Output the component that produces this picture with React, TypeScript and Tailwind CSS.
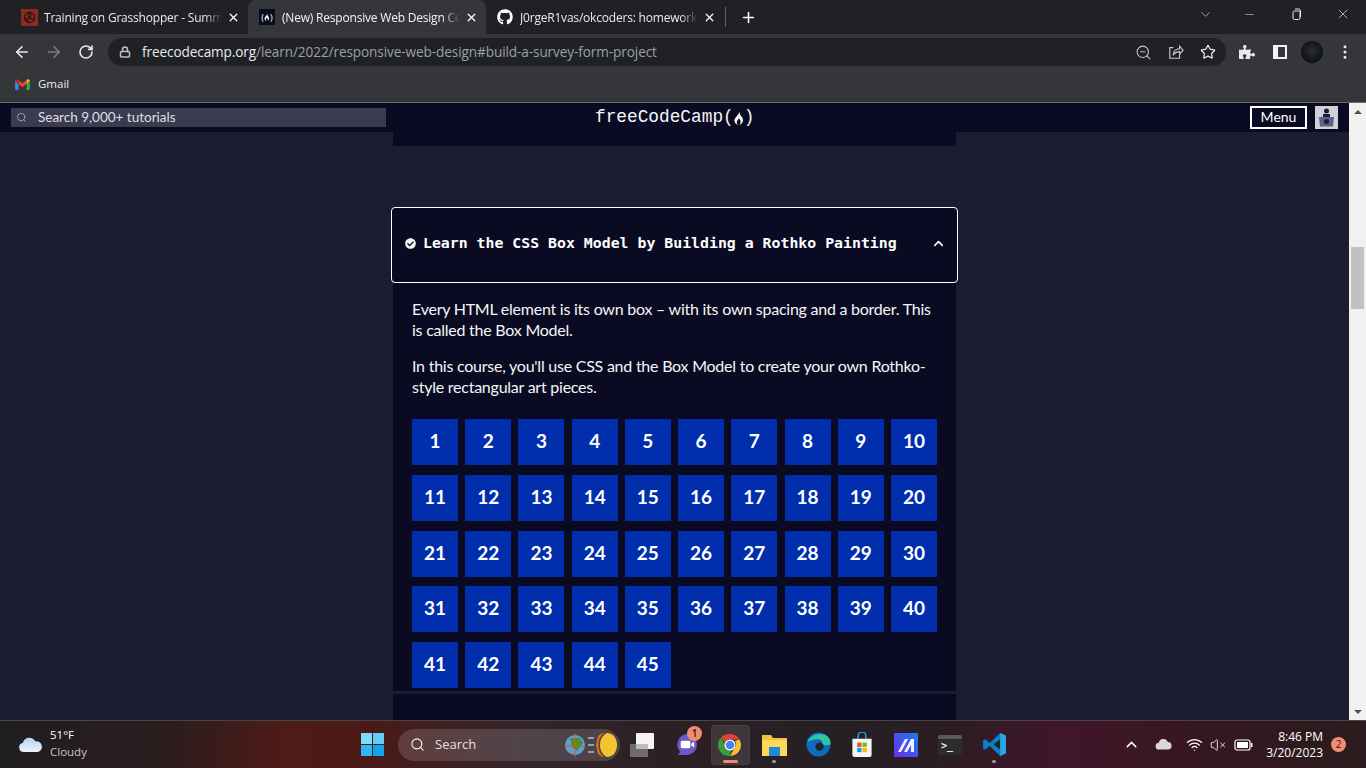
import React from 'react';
import { ArrowLeft, ArrowRight, ChevronDown, ChevronUp, Lock, Minus, Plus, RotateCw, Search, X, EllipsisVertical, Star, Wifi, VolumeX, ZoomOut } from 'lucide-react';
import { FaGithub, FaCheckCircle, FaPuzzlePiece } from 'react-icons/fa';

const NUMBERS = Array.from({ length: 45 }, (_, i) => i + 1);

const Flame = ({ className }: { className?: string }) => (
  <svg viewBox="0 0 12 16" className={className} fill="currentColor">
    <path d="M6.300 0.500c.5 2.600-1 3.800-2.300 5.600C2.900 7.600 1 9.200 1 11c0 2.500 1.800 4.300 3.800 4.700-1.200-1-1.500-2.400-.9-3.700.5-1 1.500-1.700 1.700-3.100 1.300 1 2.600 2.900 2 4.800-.2.700-.6 1.400-1.300 2 2.200-.4 4-2.200 4-4.700 0-2.400-1.500-3.700-2.500-5.200C7 4.300 6.300 2.600 6.300 0.500z" />
  </svg>
);

const Tab = ({ icon, title, active }: { icon: React.ReactNode; title: string; active?: boolean }) => (
  <div className={`flex h-[34px] w-[238px] shrink-0 items-center gap-[5px] pl-[9px] pr-[8px] ${active ? 'rounded-t-lg bg-[#35363a] text-[#f1f3f4]' : 'text-[#e8eaed]'}`}>
    <span className="flex w-[20px] shrink-0 justify-center">{icon}</span>
    <span className="min-w-0 flex-1 whitespace-nowrap pt-[1px] text-[12px] tracking-[-0.2px] [mask-image:linear-gradient(to_right,black_90%,transparent)]">{title}</span>
    <X size={13} strokeWidth={2.4} className="shrink-0 text-white" />
  </div>
);

const ChromeBar = () => (
  <div className="font-['Open_Sans',sans-serif]">
    <div className="flex h-[34px] items-center bg-[#202124] pl-[10px]">
      <Tab
        title="Training on Grasshopper - Summ"
        icon={
          <span className="flex h-[17px] w-[17px] items-center justify-center bg-[#8e2a20]">
            <svg viewBox="0 0 16 16" className="h-[15px] w-[15px]" fill="none" stroke="#2b1512" strokeWidth="1.4">
              <circle cx="8" cy="8" r="5.500" />
              <path d="M8 2.500c3 2 1 4 0 5.500S4 10 2.500 8M13.500 8c-2 3-4 1-5.500 0s-2-4 0-5.500M8 13.500c-2.500-1-2-4 0-5.500" />
            </svg>
          </span>
        }
      />
      <Tab
        active
        title="(New) Responsive Web Design Ce"
        icon={
          <span className="flex h-[16px] w-[16px] items-center justify-center bg-[#0a0a23] text-[9px] leading-none text-white">
            (<Flame className="h-[8px] w-[6px]" />)
          </span>
        }
      />
      <Tab title="J0rgeR1vas/okcoders: homework" icon={<FaGithub size={16} className="text-white" />} />
      <span className="ml-[1px] h-[20px] w-px bg-[#5f6368]" />
      <Plus size={17} strokeWidth={2.200} className="ml-[14px] text-white" />
      <div className="-mt-[6px] ml-auto flex items-center text-[#e8eaed]">
        <ChevronDown size={15} strokeWidth={1} className="mr-[30px]" />
        <Minus size={13} strokeWidth={1} className="mr-[35px]" />
        <svg viewBox="0 0 12 12" className="mr-[32px] h-[12px] w-[12px]" fill="none" stroke="currentColor" strokeWidth="1">
          <rect x="2" y="3" width="7" height="8.500" rx="1.500" />
          <path d="M4 1h3.500a2 2 0 0 1 2 2v6" />
        </svg>
        <X size={16} strokeWidth={1} className="mr-[15px]" />
      </div>
    </div>

    <div className="flex h-[34px] items-center bg-[#35363a] pt-[2px]">
      <ArrowLeft size={18} strokeWidth={2.200} className="ml-[13px] text-[#e8eaed]" />
      <ArrowRight size={18} strokeWidth={2.200} className="ml-[14px] text-[#7b7d80]" />
      <RotateCw size={16} strokeWidth={2.400} className="ml-[15px] text-[#e8eaed]" />
      <div className="ml-[14px] flex h-[28px] w-[1118px] items-center rounded-full bg-[#202124] pl-[11px] pr-[10px]">
        <Lock size={12} strokeWidth={3} className="text-[#bdc1c6]" />
        <span className="ml-[11px] whitespace-nowrap text-[13.6px] tracking-[-0.1px] text-[#9aa0a6]">
          <span className="text-[#e8eaed]">freecodecamp.org</span>/learn/2022/responsive-web-design#build-a-survey-form-project
        </span>
        <div className="ml-auto flex items-center gap-[16px] text-[#c4c7c5]">
          <ZoomOut size={17} strokeWidth={1.500} />
          <svg viewBox="0 0 18 18" className="h-[16px] w-[16px]" fill="none" stroke="currentColor" strokeWidth="1.300">
            <path d="M6 4H2v12h11v-4" />
            <path d="M6 12c0-4 3-6.500 7-6.500V2.500l4 4.500-4 4.500V8.500c-3 0-5 1-7 3.500z" />
          </svg>
          <Star size={16} strokeWidth={1.800} className="text-[#e8eaed]" />
        </div>
      </div>
      <FaPuzzlePiece size={16} className="ml-[13px] text-[#e8eaed]" />
      <span className="ml-[18px] flex h-[14px] w-[14px] justify-end border-2 border-[#f1f3f4] bg-[#f1f3f4]">
        <span className="h-full w-[7px] bg-[#35363a]" />
      </span>
      <span className="ml-[14px] h-[22px] w-[22px] rounded-full bg-[radial-gradient(circle_at_50%_45%,#2a3038,#0e0e10_75%)]" />
      <EllipsisVertical size={18} strokeWidth={2} className="ml-[13px] text-[#e8eaed]" />
    </div>

    <div className="flex h-[34px] items-center bg-[#35363a] pb-[2px] pl-[15px] text-[11.500px] text-[#e8eaed]">
      <svg viewBox="0 0 16 12" className="h-[11px] w-[15px]">
        <path d="M0 2v9a1 1 0 0 0 1 1h2.500V5.500z" fill="#4285f4" />
        <path d="M16 2v9a1 1 0 0 1-1 1h-2.500V5.500z" fill="#34a853" />
        <path d="M3.500 5.500V1L8 4.600 12.500 1v4.500L8 9z" fill="#ea4335" />
        <path d="M0 2c0-1.400 1.500-2.300 2.700-1.400l.8.400v4.500z" fill="#c5221f" />
        <path d="M16 2c0-1.400-1.500-2.300-2.700-1.400l-.8.400v4.500z" fill="#fbbc04" />
      </svg>
      <span className="ml-[8px]">Gmail</span>
    </div>
    <div className="h-px bg-[#6b6c70]" />
  </div>
);

const FccNav = () => (
  <div className="flex h-[29px] shrink-0 items-center bg-[#0a0a23] font-['Lato',sans-serif] text-white">
    <div className="ml-[11px] flex h-[19px] w-[375px] items-center bg-[#3b3b4f] pl-[5px] text-[13.500px] text-[#dfdfe2]">
      <Search size={11} strokeWidth={1.500} className="text-[#bdbdc6]" />
      <span className="ml-[11px] pb-[1px]">Search 9,000+ tutorials</span>
    </div>
    <div className="ml-[209px] flex items-center whitespace-nowrap font-['Liberation_Mono',monospace] text-[17.8px] leading-none text-[#f5f6f7]">
      freeCodeCamp(
      <Flame className="-mx-[1px] h-[15px] w-[12px]" />)
    </div>
    <div className="ml-auto flex h-[23px] w-[57px] items-center justify-center border-2 border-white pb-[2px] text-[14px]">Menu</div>
    <div className="ml-[8px] mr-[11px] flex h-[23px] w-[23px] flex-col items-center justify-end bg-[#d0d0d5]">
      <svg viewBox="0 0 23 23" className="h-[23px] w-[23px]">
        <circle cx="11.500" cy="5" r="2.500" fill="#1b1b32" />
        <rect x="8" y="8" width="7" height="3" fill="#1b1b32" />
        <path d="M4 11h15l-1 9.500H5z" fill="#5f5f8a" />
        <circle cx="11.500" cy="15.500" r="2.500" fill="#1b1b32" />
      </svg>
    </div>
  </div>
);

const Scrollbar = () => (
  <div className="flex w-[17px] shrink-0 flex-col items-center bg-[#f1f1f1]">
    <div className="mt-[7px] h-0 w-0 border-x-[4px] border-b-[4px] border-x-transparent border-b-[#505050]" />
    <div className="mt-[133px] h-[62px] w-[13px] bg-[#c1c1c1]" />
    <div className="mt-auto mb-[6px] h-0 w-0 border-x-[4px] border-t-[4px] border-x-transparent border-t-[#505050]" />
  </div>
);

const Certification = () => (
  <div className="flex min-h-0 flex-1 flex-col items-center overflow-hidden bg-[#1b1b32] font-['Lato',sans-serif] text-[#f5f6f7]">
    <div className="h-[14px] w-[563px] shrink-0 bg-[#0a0a23]" />
    <div className="mt-[61px] flex h-[76px] w-[567px] shrink-0 items-center rounded-[4px] border border-white bg-[#0a0a23] pb-[4px] pl-[13px] pr-[11px]">
      <FaCheckCircle size={11} className="text-[#f5f6f7]" />
      <span className="ml-[7px] whitespace-nowrap font-['DejaVu_Sans_Mono',monospace] text-[14.85px] font-bold text-white">
        Learn the CSS Box Model by Building a Rothko Painting
      </span>
      <ChevronUp size={15} strokeWidth={2.500} className="ml-auto text-white" />
    </div>
    <div className="w-[563px] shrink-0 bg-[#0a0a23] px-[19px] pb-[3px] pt-[15px] text-[16px] leading-[21px] tracking-[-0.24px]">
      <p>Every HTML element is its own box – with its own spacing and a border. This is called the Box Model.</p>
      <p className="mt-[15px]">In this course, you'll use CSS and the Box Model to create your own Rothko-style rectangular art pieces.</p>
      <div className="mt-[22px] grid w-[525px] grid-cols-[repeat(10,46px)] justify-between gap-y-[9.75px] tracking-normal">
        {NUMBERS.map((n) => (
          <div key={n} className="flex h-[46px] items-center justify-center bg-[#002ead] pb-[3px] text-[19px] font-bold text-white">
            {n}
          </div>
        ))}
      </div>
    </div>
    <div className="h-[3px] w-[563px] shrink-0 bg-[#1b1b32]" />
    <div className="w-[563px] flex-1 bg-[#0a0a23]" />
  </div>
);

const Slot = ({ children, dot }: { children: React.ReactNode; dot?: boolean }) => (
  <div className="relative flex h-full w-[44px] shrink-0 items-center justify-center">
    {children}
    {dot && <span className="absolute bottom-[5px] h-[3px] w-[4px] rounded-full bg-[#9a9a9a]" />}
  </div>
);

const Taskbar = () => (
  <div className="flex h-[48px] shrink-0 items-center border-t border-[#4a4446] bg-[linear-gradient(90deg,#201e21_0%,#2a1d1e_12%,#4f1b17_21%,#4a1a17_27%,#33242a_38%,#2b2024_50%,#242024_62%,#2e1c24_70%,#41162a_78%,#36171f_88%,#2a1c1e_100%)] font-['Open_Sans',sans-serif] text-white">
    <svg viewBox="0 0 26 18" className="ml-[18px] h-[17px] w-[25px]">
      <defs>
        <linearGradient id="cloudFill" x1="0" y1="0" x2="0" y2="1">
          <stop offset="0" stopColor="#b8d4f0" />
          <stop offset="1" stopColor="#eef3fa" />
        </linearGradient>
      </defs>
      <path d="M6 17a5 5 0 0 1-1-9.900 7 7 0 0 1 13-1.500A5.500 5.500 0 0 1 20.500 17z" fill="url(#cloudFill)" />
    </svg>
    <div className="ml-[7px] w-[60px] pb-[3px] text-[11.500px] leading-[17px]">
      <div>51°F</div>
      <div className="text-[#c8c5c6]">Cloudy</div>
    </div>
    <div className="ml-[251px] grid h-[23px] w-[23px] grid-cols-2 gap-[1px]">
      <span className="bg-[#7fdcf9]" />
      <span className="bg-[#5fcdf6]" />
      <span className="bg-[#2fb6f4]" />
      <span className="bg-[#14a4ee]" />
    </div>
    <div className="ml-[14px] flex h-[32px] w-[222px] items-center rounded-full bg-white/15 pl-[12px] text-[13px] text-[#e4e0e1]">
      <Search size={15} strokeWidth={1.700} className="text-white" />
      <span className="ml-[10px]">Search</span>
      <svg viewBox="0 0 54 30" className="ml-auto mr-[2px] h-[30px] w-[54px]">
        <circle cx="11" cy="15" r="10" fill="#5f9fd0" />
        <path d="M6 8h10l3 5-6 8-5-4z" fill="#4f8f2a" />
        <path d="M11 3v24M1 16h20" stroke="#d8552f" strokeWidth="0.900" />
        <path d="M30 8h-6M30 15h-6M30 22h-6" stroke="#8fa3b3" strokeWidth="1.800" />
        <path d="M43 3c6 0 10 5 10 12s-4 12-10 12c-4-2-7-6-7-12s3-10 7-12z" fill="#f4c430" />
        <path d="M40 3c-4 3-5.500 7-5.500 12S36 24 40 27c-3 0-4-2-6-3l-2-9 2-9c2-1 3-3 6-3z" fill="#e0701f" />
      </svg>
    </div>
    <Slot>
      <svg viewBox="0 0 24 24" className="h-[24px] w-[24px]">
        <rect x="0" y="11" width="18" height="15" fill="#6e6c6d" rx="1" />
        <rect x="6" y="0" width="18" height="16" fill="#f4f4f4" rx="1" />
        <rect x="6" y="11" width="12" height="5" fill="#bdbbbc" />
      </svg>
    </Slot>
    <Slot>
      <svg viewBox="0 0 24 24" className="h-[23px] w-[23px]">
        <path d="M12 1a11 11 0 0 1 0 22H3l2.500-3.500A11 11 0 0 1 12 1z" fill="#6a5ac8" />
        <rect x="6" y="8" width="10" height="8" rx="1.500" fill="#fff" />
        <path d="M17 11l3-2v6l-3-2z" fill="#fff" />
      </svg>
      <span className="absolute left-[23px] top-[5px] flex h-[15px] w-[15px] items-center justify-center rounded-full bg-[#f28b72] text-[10px] font-semibold text-[#2a1a1a]">1</span>
    </Slot>
    <Slot>
      <div className="flex h-[40px] w-[39px] items-center justify-center rounded-[4px] border border-white/5 bg-white/10">
        <svg viewBox="0 0 24 24" className="h-[24px] w-[24px]">
          <path d="M12 1a11 11 0 0 1 9.500 5.500H12a5.500 5.500 0 0 0-5 3L3 4.500A11 11 0 0 1 12 1z" fill="#db4437" />
          <path d="M21.500 6.500A11 11 0 0 1 12 23l4.700-8.200A5.500 5.500 0 0 0 17 8z" fill="#fbc02d" />
          <path d="M12 23A11 11 0 0 1 3 4.500l4.700 8.200A5.500 5.500 0 0 0 13 17.300z" fill="#3c9a3f" />
          <circle cx="12" cy="12" r="5.500" fill="#fff" />
          <circle cx="12" cy="12" r="4.300" fill="#4285f4" />
        </svg>
      </div>
      <span className="absolute bottom-[5px] h-[3px] w-[15px] rounded-full bg-[#f28b72]" />
    </Slot>
    <Slot dot>
      <svg viewBox="0 0 25 23" className="h-[23px] w-[25px]">
        <path d="M0 2h9l2 3h14v18H0z" fill="#f4c038" />
        <path d="M0 7h25v16H0z" fill="#fbd75b" />
        <path d="M7 14h11v9H7z" fill="#1e88d9" />
      </svg>
    </Slot>
    <Slot>
      <svg viewBox="0 0 24 24" className="h-[25px] w-[25px]">
        <circle cx="12" cy="12" r="11.500" fill="#0f6cbd" />
        <path d="M1 11C3 3 12 0 19 3c4 2 5 6 4.500 9-2 1-6 1-8 0 1-3-1-5-4-5-4 0-9 1-10.500 4z" fill="#2ec4a8" />
        <circle cx="13" cy="14" r="4" fill="#20262b" />
      </svg>
    </Slot>
    <Slot>
      <svg viewBox="0 0 24 26" className="h-[25px] w-[24px]">
        <path d="M8 7V4a4 4 0 0 1 8 0v3" fill="none" stroke="#25a8d8" strokeWidth="1.500" />
        <path d="M2 7h20v17a2 2 0 0 1-2 2H4a2 2 0 0 1-2-2z" fill="#f4f4f4" />
        <rect x="7" y="11" width="4.500" height="4.500" fill="#f25022" />
        <rect x="12.500" y="11" width="4.500" height="4.500" fill="#7fba00" />
        <rect x="7" y="16.500" width="4.500" height="4.500" fill="#00a4ef" />
        <rect x="12.500" y="16.500" width="4.500" height="4.500" fill="#ffb900" />
      </svg>
    </Slot>
    <Slot>
      <svg viewBox="0 0 24 24" className="h-[24px] w-[24px]">
        <defs>
          <linearGradient id="maFill" x1="0" y1="1" x2="1" y2="0">
            <stop offset="0" stopColor="#6a2cf0" />
            <stop offset="1" stopColor="#1e7de8" />
          </linearGradient>
        </defs>
        <rect width="24" height="24" fill="url(#maFill)" />
        <path d="M4 19L11 6h3L7 19zM10 19L17 6h3v13h-3v-7l-4 7z" fill="#f2f2ff" />
      </svg>
    </Slot>
    <Slot>
      <div className="flex h-[20px] w-[24px] items-center rounded-[2px] bg-[linear-gradient(#5a5a5a_0,#5a5a5a_4px,#2c2c2c_4px)] pl-[3px] pt-[3px]">
        <span className="font-['DejaVu_Sans_Mono',monospace] text-[10px] font-bold leading-none text-[#e6e6e6]">&gt;_</span>
      </div>
    </Slot>
    <Slot dot>
      <svg viewBox="0 0 24 24" className="h-[25px] w-[25px]">
        <path d="M17.500 1L23 3.500v17L17.500 23 7.500 13.500 3 17 1 15.800V8.200L3 7l4.500 3.500z" fill="#0a7fc9" />
        <path d="M17.500 7L11 12l6.500 5z" fill="#20262b" />
        <path d="M17.500 1L23 3.500v17L17.500 23z" fill="#28a8ea" />
      </svg>
    </Slot>
    <ChevronUp size={17} strokeWidth={2} className="ml-[107px] text-white" />
    <svg viewBox="0 0 20 14" className="ml-[15px] h-[13px] w-[17px]">
      <path d="M5 13a4 4 0 0 1-.5-8 5.500 5.500 0 0 1 10.500-1A4.500 4.500 0 0 1 15 13z" fill="#d9d7d8" />
    </svg>
    <Wifi size={17} strokeWidth={1.800} className="ml-[14px] text-white" />
    <VolumeX size={16} strokeWidth={1.400} className="ml-[7px] text-[#e8e8e8]" />
    <svg viewBox="0 0 19 12" className="ml-[8px] h-[12px] w-[19px]">
      <rect x="1" y="1" width="15" height="10" rx="2" fill="none" stroke="#fff" strokeWidth="1.200" />
      <rect x="3" y="3" width="11" height="6" fill="#fff" />
      <rect x="17" y="4" width="1.500" height="4" fill="#fff" />
    </svg>
    <div className="ml-[12px] w-[58px] text-right text-[12px] leading-[16px]">
      <div>8:46 PM</div>
      <div className="whitespace-nowrap">3/20/2023</div>
    </div>
    <span className="ml-[8px] flex h-[15px] w-[15px] items-center justify-center rounded-full bg-[#f28b72] text-[10px] text-[#2a1a1a]">2</span>
  </div>
);

export default function App() {
  return (
    <div className="flex h-screen w-full flex-col overflow-hidden bg-[#1b1b32]">
      <ChromeBar />
      <div className="flex min-h-0 flex-1">
        <div className="flex min-w-0 flex-1 flex-col">
          <FccNav />
          <Certification />
        </div>
        <Scrollbar />
      </div>
      <Taskbar />
    </div>
  );
}
